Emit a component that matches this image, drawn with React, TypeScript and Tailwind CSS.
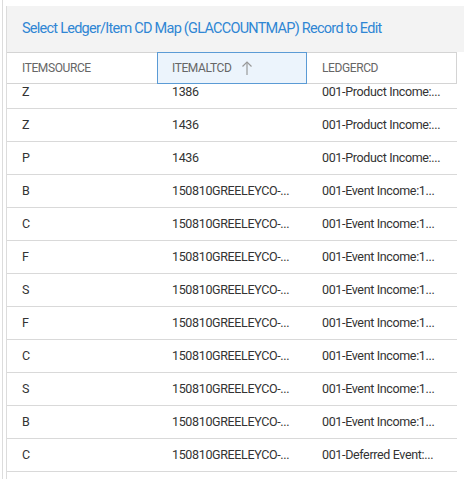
import React from 'react';

const rows: [string, string, string][] = [
  ['Z', '1386', '001-Product Income:...'],
  ['Z', '1436', '001-Product Income:...'],
  ['P', '1436', '001-Product Income:...'],
  ['B', '150810GREELEYCO-...', '001-Event Income:1...'],
  ['C', '150810GREELEYCO-...', '001-Event Income:1...'],
  ['F', '150810GREELEYCO-...', '001-Event Income:1...'],
  ['S', '150810GREELEYCO-...', '001-Event Income:1...'],
  ['F', '150810GREELEYCO-...', '001-Event Income:1...'],
  ['C', '150810GREELEYCO-...', '001-Event Income:1...'],
  ['S', '150810GREELEYCO-...', '001-Event Income:1...'],
  ['B', '150810GREELEYCO-...', '001-Event Income:1...'],
  ['C', '150810GREELEYCO-...', '001-Deferred Event:...'],
];

const font = { fontFamily: 'Roboto, "Liberation Sans", sans-serif' };

export default function App() {
  return (
    <div className="w-[464px] h-[479px] overflow-hidden bg-white flex" style={font}>
      {/* outer frame line */}
      <div className="w-[2px] shrink-0" />
      <div className="w-[4px] shrink-0 border-l border-[#dcdcdc]" />
      <div className="flex-1 flex flex-col pt-[6px] min-w-0">
        {/* Title bar */}
        <div className="h-[46px] shrink-0 bg-[#f3f3f3] border-l border-[#dcdcdc] flex items-center pl-[15px]">
          <span className="text-[14.5px] tracking-[-0.75px] text-[#2f86d4] whitespace-nowrap">
            Select Ledger/Item CD Map (GLACCOUNTMAP) Record to Edit
          </span>
        </div>

        <div className="flex-1 border-l border-[#dcdcdc] min-h-0 overflow-hidden">
          {/* Column header */}
          <div className="flex h-[32px] w-[450px] border-t border-b border-[#d4d4d4] border-r text-[12px] tracking-[-0.4px] text-[#666]">
            <div className="w-[150px] flex items-center pl-[15px]">ITEMSOURCE</div>
            <div className="w-[150px] -my-px h-[32px] flex items-center pl-[14px] bg-[#ecf4fc] border border-[#5b9bd5] gap-[10px]">
              <span>ITEMALTCD</span>
              <svg width="12" height="16" viewBox="0 0 12 16" fill="none" stroke="#999" strokeWidth="1.2">
                <path d="M6 15V2" />
                <path d="M1.5 6.5L6 2l4.5 4.5" />
              </svg>
            </div>
            <div className="flex-1 flex items-center pl-[15px]">LEDGERCD</div>
          </div>

          {/* Rows (scrolled) */}
          <div className="-mt-[8px]">
            {rows.map((r, i) => (
              <div
                key={i}
                className="flex h-[33px] w-[450px] border-b border-[#d9d9d9] items-center text-[12.5px] tracking-[-0.35px] text-[#333]"
              >
                <div className="w-[150px] pl-[15px] whitespace-nowrap">{r[0]}</div>
                <div className="w-[150px] pl-[15px] whitespace-nowrap">{r[1]}</div>
                <div className="flex-1 pl-[15px] whitespace-nowrap">{r[2]}</div>
              </div>
            ))}
          </div>
        </div>
      </div>
    </div>
  );
}
